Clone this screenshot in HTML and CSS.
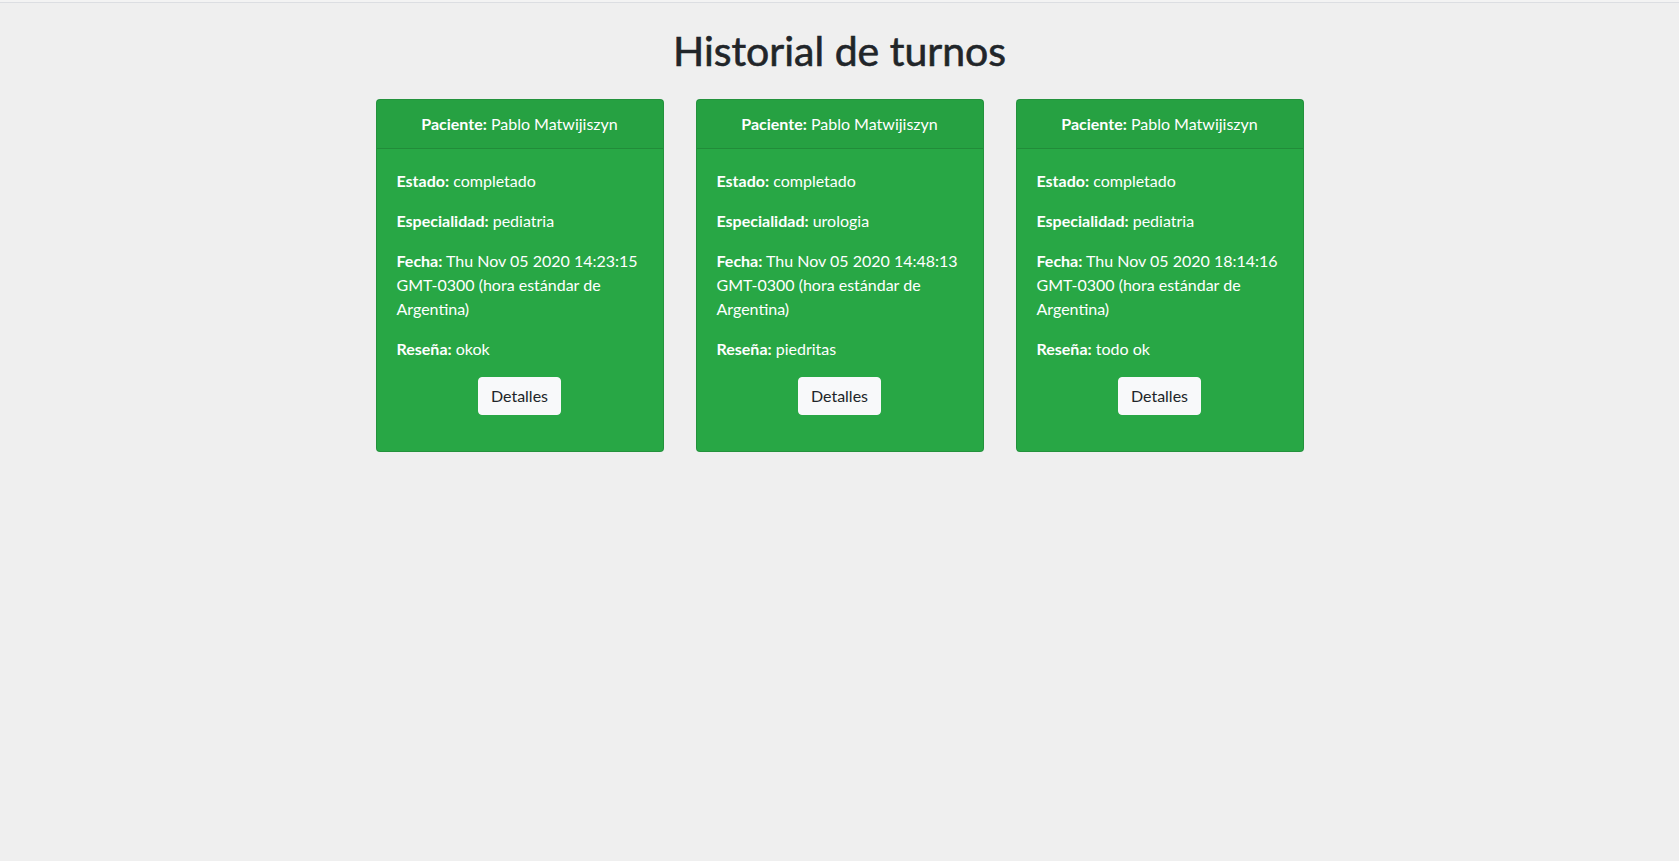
FILE: index.html
```html
<!DOCTYPE html>
<html lang="es">
<head>
<meta charset="utf-8">
<title>Historial de turnos</title>
<link rel="stylesheet" href="styles.css">
</head>
<body>
<div class="topbar"></div>
<h1 class="title">Historial de turnos</h1>
<div class="cards">
  <div class="card">
    <div class="card-header"><b>Paciente:</b> Pablo Matwijiszyn</div>
    <div class="card-body">
      <p><b>Estado:</b> completado</p>
      <p><b>Especialidad:</b> pediatria</p>
      <p><b>Fecha:</b> Thu Nov 05 2020 14:23:15 GMT-0300 (hora estándar de Argentina)</p>
      <p><b>Reseña:</b> okok</p>
      <div class="actions"><button class="btn">Detalles</button></div>
    </div>
  </div>
  <div class="card">
    <div class="card-header"><b>Paciente:</b> Pablo Matwijiszyn</div>
    <div class="card-body">
      <p><b>Estado:</b> completado</p>
      <p><b>Especialidad:</b> urologia</p>
      <p><b>Fecha:</b> Thu Nov 05 2020 14:48:13 GMT-0300 (hora estándar de Argentina)</p>
      <p><b>Reseña:</b> piedritas</p>
      <div class="actions"><button class="btn">Detalles</button></div>
    </div>
  </div>
  <div class="card">
    <div class="card-header"><b>Paciente:</b> Pablo Matwijiszyn</div>
    <div class="card-body">
      <p><b>Estado:</b> completado</p>
      <p><b>Especialidad:</b> pediatria</p>
      <p><b>Fecha:</b> Thu Nov 05 2020 18:14:16 GMT-0300 (hora estándar de Argentina)</p>
      <p><b>Reseña:</b> todo ok</p>
      <div class="actions"><button class="btn">Detalles</button></div>
    </div>
  </div>
</div>
</body>
</html>
```
FILE: styles.css
```css
html, body {
  margin: 0;
  padding: 0;
}
body {
  background: #efefef;
  font-family: Lato, "Open Sans", "Liberation Sans", sans-serif;
  font-size: 16px;
  line-height: 24px;
  color: #212529;
  min-height: 861px;
}
.topbar {
  height: 2px;
  background: #f3f3f3;
  border-bottom: 1px solid #dcdee2;
}
.title {
  margin: 24px 0 24px;
  text-align: center;
  font-size: 41px;
  line-height: 48px;
  font-weight: 400;
  -webkit-text-stroke: 0.6px #212529;
  color: #212529;
}
.cards {
  display: flex;
  justify-content: center;
  align-items: flex-start;
  gap: 32px;
}
.card {
  width: 288px;
  box-sizing: border-box;
  background: #28a745;
  color: #fff;
  border: 1px solid rgba(0, 0, 0, .125);
  border-radius: 4px;
}
.card-header {
  padding: 12px 20px;
  text-align: center;
  background: rgba(0, 0, 0, .03);
  border-bottom: 1px solid rgba(0, 0, 0, .125);
}
.card-body {
  padding: 20px;
}
.card-body p {
  margin: 0 0 16px;
}
b {
  font-weight: 700;
}
.actions {
  text-align: center;
  margin-bottom: 16px;
}
.btn {
  font-family: inherit;
  font-size: 16px;
  line-height: 24px;
  padding: 6px 12px;
  color: #212529;
  background: #f8f9fa;
  border: 1px solid #f8f9fa;
  border-radius: 4px;
  cursor: pointer;
}
```
